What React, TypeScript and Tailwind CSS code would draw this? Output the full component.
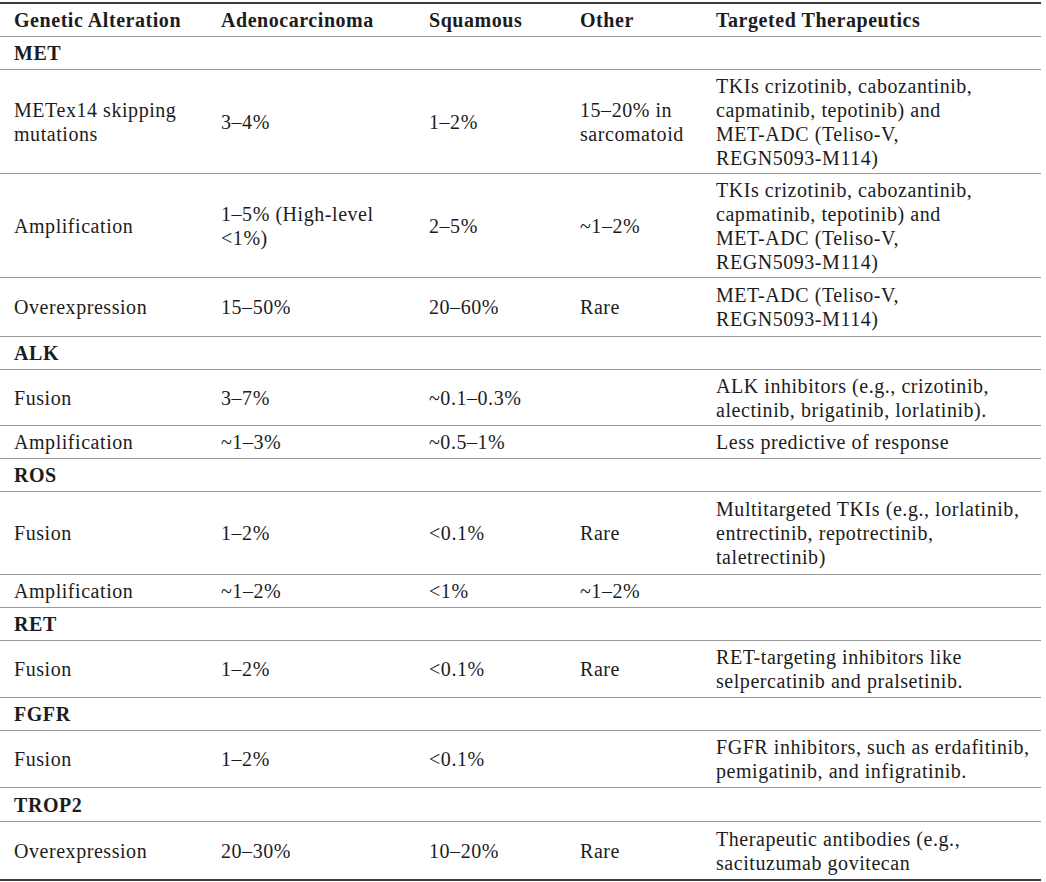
import * as React from "react"

type Row =
  | { kind: "section"; label: string; h: string }
  | { kind: "data"; cells: string[][]; h: string }

const rows: Row[] = [
  { kind: "section", label: "MET", h: "h-[33px]" },
  {
    kind: "data",
    h: "h-[104px]",
    cells: [
      ["METex14 skipping", "mutations"],
      ["3–4%"],
      ["1–2%"],
      ["15–20% in", "sarcomatoid"],
      ["TKIs crizotinib, cabozantinib,", "capmatinib, tepotinib) and", "MET-ADC (Teliso-V,", "REGN5093-M114)"],
    ],
  },
  {
    kind: "data",
    h: "h-[104px]",
    cells: [
      ["Amplification"],
      ["1–5% (High-level", "<1%)"],
      ["2–5%"],
      ["~1–2%"],
      ["TKIs crizotinib, cabozantinib,", "capmatinib, tepotinib) and", "MET-ADC (Teliso-V,", "REGN5093-M114)"],
    ],
  },
  {
    kind: "data",
    h: "h-[59px]",
    cells: [["Overexpression"], ["15–50%"], ["20–60%"], ["Rare"], ["MET-ADC (Teliso-V,", "REGN5093-M114)"]],
  },
  { kind: "section", label: "ALK", h: "h-[33px]" },
  {
    kind: "data",
    h: "h-[56px]",
    cells: [
      ["Fusion"],
      ["3–7%"],
      ["~0.1–0.3%"],
      [],
      ["ALK inhibitors (e.g., crizotinib,", "alectinib, brigatinib, lorlatinib)."],
    ],
  },
  {
    kind: "data",
    h: "h-[33px]",
    cells: [["Amplification"], ["~1–3%"], ["~0.5–1%"], [], ["Less predictive of response"]],
  },
  { kind: "section", label: "ROS", h: "h-[33px]" },
  {
    kind: "data",
    h: "h-[83px]",
    cells: [
      ["Fusion"],
      ["1–2%"],
      ["<0.1%"],
      ["Rare"],
      ["Multitargeted TKIs (e.g., lorlatinib,", "entrectinib, repotrectinib,", "taletrectinib)"],
    ],
  },
  {
    kind: "data",
    h: "h-[33px]",
    cells: [["Amplification"], ["~1–2%"], ["<1%"], ["~1–2%"], []],
  },
  { kind: "section", label: "RET", h: "h-[33px]" },
  {
    kind: "data",
    h: "h-[57px]",
    cells: [
      ["Fusion"],
      ["1–2%"],
      ["<0.1%"],
      ["Rare"],
      ["RET-targeting inhibitors like", "selpercatinib and pralsetinib."],
    ],
  },
  { kind: "section", label: "FGFR", h: "h-[33px]" },
  {
    kind: "data",
    h: "h-[57px]",
    cells: [
      ["Fusion"],
      ["1–2%"],
      ["<0.1%"],
      [],
      ["FGFR inhibitors, such as erdafitinib,", "pemigatinib, and infigratinib."],
    ],
  },
  { kind: "section", label: "TROP2", h: "h-[34px]" },
  {
    kind: "data",
    h: "h-[57px]",
    cells: [
      ["Overexpression"],
      ["20–30%"],
      ["10–20%"],
      ["Rare"],
      ["Therapeutic antibodies (e.g.,", "sacituzumab govitecan"],
    ],
  },
]

const grid = "grid grid-cols-[207px_208px_151px_136px_339px] items-center"
const headers = ["Genetic Alteration", "Adenocarcinoma", "Squamous", "Other", "Targeted Therapeutics"]

function Cell({ lines }: { lines: string[] }) {
  return (
    <div className="pl-[14px]">
      {lines.map((l, i) => (
        <span key={i} className="block whitespace-nowrap">
          {l}
        </span>
      ))}
    </div>
  )
}

export default function App() {
  return (
    <div
      className="bg-white w-[1046px] h-[882px] pt-[2px] text-[#1c1c1c] text-[20px] leading-[24px] tracking-[0.55px]"
      style={{ fontFamily: '"Liberation Serif", "Times New Roman", serif' }}
    >
      <div className="w-[1041px] border-t-2 border-b-2 border-[#3a3a3a]">
        {/* header */}
        <div className={`${grid} h-[33px] border-b border-[#9a9a9a] font-bold`}>
          {headers.map((h) => (
            <Cell key={h} lines={[h]} />
          ))}
        </div>
        {rows.map((r, i) => {
          const last = i === rows.length - 1
          if (r.kind === "section") {
            return (
              <div key={i} className={`flex items-center ${r.h} border-b border-[#9a9a9a] font-bold`}>
                <Cell lines={[r.label]} />
              </div>
            )
          }
          return (
            <div key={i} className={`${grid} ${r.h} ${last ? "" : "border-b border-[#9a9a9a]"}`}>
              {r.cells.map((c, j) => (
                <Cell key={j} lines={c} />
              ))}
            </div>
          )
        })}
      </div>
    </div>
  )
}
